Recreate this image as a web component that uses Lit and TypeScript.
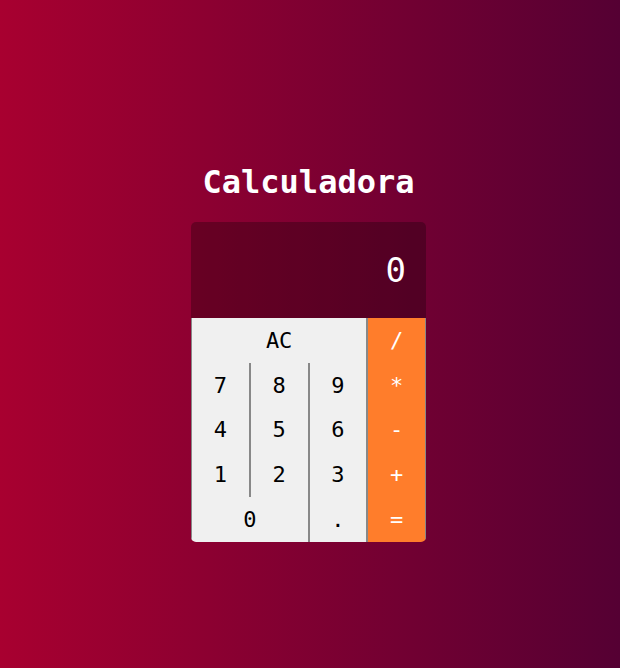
import { LitElement, html, css } from "lit";
import { customElement, state } from "lit/decorators.js";
import { classMap } from "lit/directives/class-map.js";

const KEYS = ["AC", "/", "7", "8", "9", "*", "4", "5", "6", "-", "1", "2", "3", "+", "0", ".", "="];
const OPERATIONS = ["/", "*", "-", "+", "="];

@customElement("calc-button")
export class CalcButton extends LitElement {
  static properties = { label: {} };
  declare label: string;

  static styles = css`
    :host { display: contents; }
    .key {
      box-sizing: border-box;
      width: 100%;
      height: 100%;
      margin: 0;
      padding: 0;
      font: 22px "DejaVu Sans Mono", monospace;
      color: #000;
      background: #f0f0f0;
      border: solid #888;
      border-width: 0 1px;
      outline: none;
    }
    .double { grid-column: span 2; }
    .triple { grid-column: span 3; }
    .operation { color: #fff; background: #ff7d2b; }
    .key:active { filter: brightness(0.9); }
  `;

  render() {
    return html`<button
      class=${classMap({
        key: true,
        operation: OPERATIONS.includes(this.label),
        double: this.label === "0",
        triple: this.label === "AC",
      })}
    >${this.label}</button>`;
  }
}

@customElement("app-root")
export class AppRoot extends LitElement {
  @state() private display = "0";

  static styles = css`
    :host {
      box-sizing: border-box;
      display: flex;
      flex-direction: column;
      align-items: center;
      justify-content: center;
      min-height: 100vh;
      padding: 37px 3px 0 0;
      font-family: "DejaVu Sans Mono", monospace;
      color: #fff;
      background: linear-gradient(to right, #a80030, #550033);
    }
    .title { margin: 0 0 21px; font-size: 32px; line-height: 38px; font-weight: 700; }
    .calculator {
      display: grid;
      grid-template-columns: repeat(4, 1fr);
      grid-template-rows: 96px repeat(5, 1fr);
      width: 235px;
      height: 320px;
      border-radius: 5px;
      overflow: hidden;
    }
    .display {
      grid-column: span 4;
      display: flex;
      align-items: center;
      justify-content: flex-end;
      padding: 20px;
      box-sizing: border-box;
      font-size: 34px;
      background: #0004;
      overflow: hidden;
    }
  `;

  private press(key: string) {
    if (key === "AC") this.display = "0";
    else if (/[0-9.]/.test(key)) this.display = this.display === "0" && key !== "." ? key : this.display + key;
  }

  render() {
    return html`
      <h1 class="title">Calculadora</h1>
      <div class="calculator">
        <output class="display">${this.display}</output>
        ${KEYS.map((k) => html`<calc-button .label=${k} @click=${() => this.press(k)}></calc-button>`)}
      </div>
    `;
  }
}
